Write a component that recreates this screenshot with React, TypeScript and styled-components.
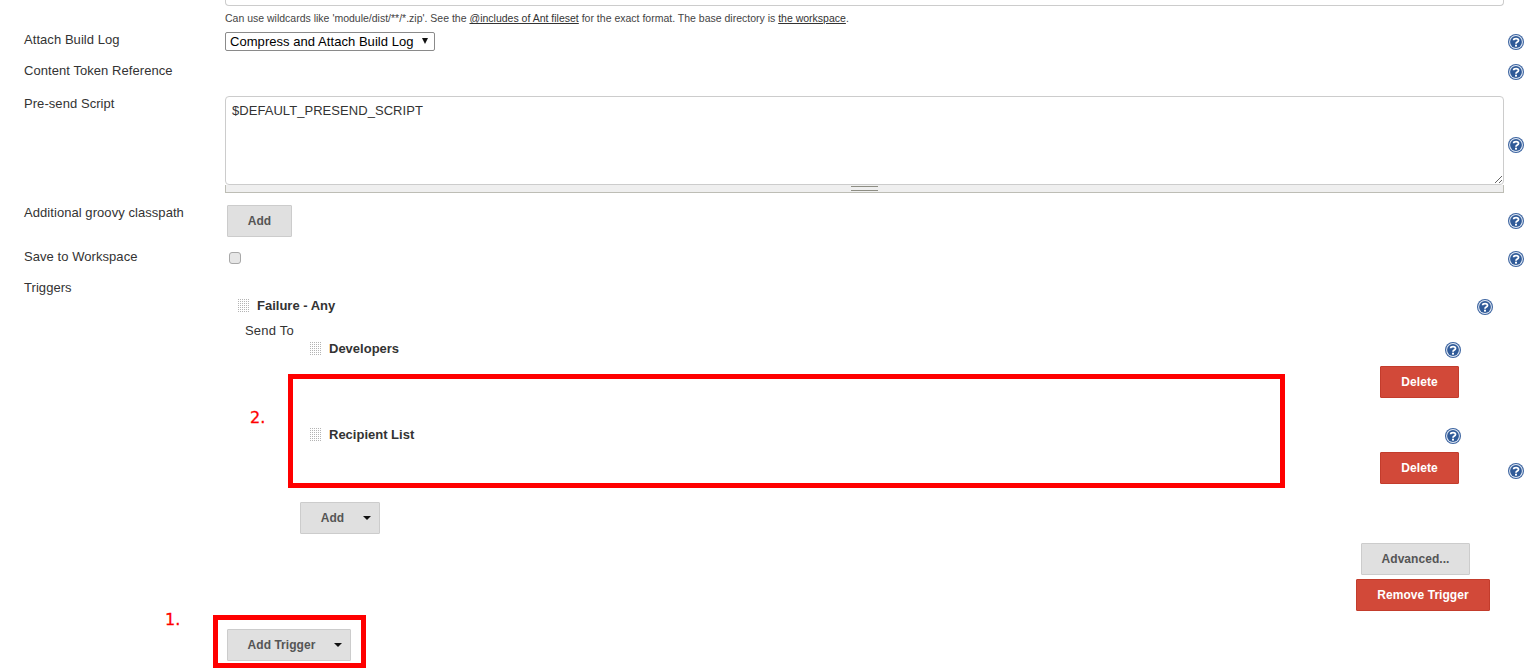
import styled, { createGlobalStyle } from 'styled-components'

const GlobalStyle = createGlobalStyle`
  html, body {
    margin: 0;
    padding: 0;
    background: #fff;
    overflow: hidden;
  }
  body {
    font-family: "Liberation Sans", Arial, sans-serif;
    font-size: 13px;
    color: #333;
  }
`;

const Page = styled.div`
  position: relative;
  width: 1536px;
  height: 668px;
  overflow: hidden;
  display: flex;
  flex-direction: column;
`;

const TopFieldEdge = styled.div`
  margin-left: 225px;
  width: 1277px;
  height: 5px;
  border: 1px solid #ccc;
  border-top: 0;
  border-radius: 0 0 4px 4px;
`;

const Hint = styled.div`
  margin-left: 225px;
  height: 26px;
  padding-top: 6px;
  box-sizing: border-box;
  font-size: 10.5px;
  line-height: 12px;
  color: #444;
  a {
    color: #333;
    text-decoration: underline;
  }
`;

const FormRow = styled.div<{ $height: number }>`
  display: grid;
  grid-template-columns: 225px 1279px 32px;
  height: ${props => props.$height}px;
  flex: none;
`;

const Label = styled.div<{ $top: number }>`
  padding: ${props => props.$top}px 0 0 24px;
  line-height: 15px;
  letter-spacing: 0.06px;
`;

const HelpSlot = styled.div<{ $top: number }>`
  padding: ${props => props.$top}px 0 0 4px;
`;

const HelpSvg = styled.svg`
  display: block;
  width: 16px;
  height: 16px;
  flex: none;
`;

const HelpIcon = () => (
  <HelpSvg viewBox="0 0 16 16">
    <circle cx="8" cy="8" r="8" fill="#3c64a0" />
    <circle cx="8" cy="8" r="6.9" fill="#e4ebf5" />
    <circle cx="8" cy="8" r="5.9" fill="#2f5a98" />
    <path d="M5.6 6.3 C5.7 4.2 10.5 4 10.5 6.5 C10.5 8.2 8.1 8 8 9.8" fill="none" stroke="#fff" strokeWidth="1.8" />
    <rect x="7" y="10.7" width="2" height="1.9" fill="#fff" />
  </HelpSvg>
);

const SelectWrap = styled.div`
  position: relative;
  width: 210px;
  height: 19px;
  &::after {
    content: "";
    position: absolute;
    left: 197px;
    top: 6px;
    border-left: 3.5px solid transparent;
    border-right: 3.5px solid transparent;
    border-top: 6px solid #111;
    pointer-events: none;
  }
`;

const LogSelect = styled.select`
  display: block;
  appearance: none;
  box-sizing: border-box;
  width: 210px;
  height: 19px;
  padding: 0 0 0 4px;
  font-family: "Liberation Sans", Arial, sans-serif;
  font-size: 13px;
  letter-spacing: 0.05px;
  color: #000;
  background: #fff;
  border: 1px solid #8a8a8a;
  border-radius: 2px;
`;

const ScriptArea = styled.textarea`
  display: block;
  box-sizing: border-box;
  width: 1279px;
  height: 89px;
  padding: 6px 6px;
  font-family: "Liberation Sans", Arial, sans-serif;
  font-size: 13px;
  line-height: 16px;
  letter-spacing: 0.05px;
  color: #333;
  border: 1px solid #ccc;
  border-radius: 4px;
  outline: none;
  resize: vertical;
`;

const ResizeGrip = styled.div`
  width: 1279px;
  height: 8px;
  box-sizing: border-box;
  background: #efefef;
  border: 1px solid #bdbdb5;
  border-width: 0 1px 1px;
  display: flex;
  justify-content: center;
  align-items: center;
  &::after {
    content: "";
    width: 27px;
    height: 3px;
    border-top: 1px solid #8e8e84;
    border-bottom: 1px solid #8e8e84;
  }
`;

const GreyButton = styled.button<{ $width: number }>`
  display: flex;
  align-items: center;
  justify-content: center;
  flex: none;
  box-sizing: border-box;
  width: ${props => props.$width}px;
  height: 32px;
  padding: 0;
  font-family: "Liberation Sans", Arial, sans-serif;
  font-size: 12px;
  font-weight: bold;
  letter-spacing: 0.05px;
  color: #555;
  background: #e0e0e0;
  border: 1px solid #ccc;
  border-radius: 1px;
`;

const CaretButton = styled(GreyButton)`
  padding-left: 12px;
`;

const RedButton = styled(GreyButton)`
  color: #fff;
  background: #d24939;
  border-color: #c33c2c;
`;

const Caret = styled.span`
  width: 0;
  height: 0;
  margin-left: 19px;
  border-left: 4px solid transparent;
  border-right: 4px solid transparent;
  border-top: 4px solid #111;
`;

const SaveCheck = styled.input`
  display: block;
  appearance: none;
  box-sizing: border-box;
  width: 12px;
  height: 12px;
  margin: 7px 0 0 4px;
  background: #e6e6e6;
  border: 1px solid #a8a8a8;
  border-radius: 3px;
`;

const AddSlot = styled.div`
  padding-left: 2px;
`;

const TriggerBody = styled.div`
  display: flex;
  flex-direction: column;
  padding-top: 17px;
`;

const DragHead = styled.div<{ $indent: number; $right: number }>`
  display: flex;
  align-items: center;
  height: 16px;
  padding-left: ${props => props.$indent}px;
  padding-right: ${props => props.$right}px;
`;

const Grip = styled.span`
  flex: none;
  width: 12px;
  height: 14px;
  margin-right: 8px;
  background-color: #fff;
  background-image: linear-gradient(#fff 1px, transparent 1px), linear-gradient(90deg, #fff 1px, #b4b4b4 1px);
  background-size: 2px 2px;
`;

const HeadTitle = styled.span`
  flex: 1;
  font-weight: bold;
`;

// the help icons sit a little below the title they belong to
const HeadHelp = styled.span`
  margin-top: 4px;
`;

const SendTo = styled.div`
  height: 17px;
  margin-top: 9px;
  padding-left: 20px;
  line-height: 17px;
  letter-spacing: 0.2px;
`;

const RecipientList = styled.div`
  display: flex;
  flex-direction: column;
  gap: 27px;
  padding-left: 84px;
`;

const Recipient = styled.div`
  display: flex;
  flex-direction: column;
`;

const RecipientHead = styled(DragHead)`
  height: 18px;
`;

const DeleteSlot = styled.div`
  display: flex;
  justify-content: flex-end;
  padding: 9px 45px 0 0;
`;

const AddRecipient = styled.div`
  display: flex;
  margin: 18px 0 0 75px;
`;

const TriggerActions = styled.div`
  display: flex;
  flex-direction: column;
  align-items: flex-end;
  gap: 4px;
  margin-top: 9px;
`;

const AdvancedSlot = styled.div`
  padding-right: 34px;
`;

const RemoveSlot = styled.div`
  padding-right: 14px;
`;

const AddTriggerSlot = styled.div`
  display: flex;
  margin: 18px 0 0 2px;
`;

// red marks that were painted over the screenshot
const RedBox = styled.div<{ $left: number; $top: number; $width: number; $height: number }>`
  position: absolute;
  left: ${props => props.$left}px;
  top: ${props => props.$top}px;
  width: ${props => props.$width}px;
  height: ${props => props.$height}px;
  box-sizing: border-box;
  border: 5px solid #f00;
`;

const RedNumber = styled.div<{ $left: number; $top: number }>`
  position: absolute;
  left: ${props => props.$left}px;
  top: ${props => props.$top}px;
  font-family: "DejaVu Sans", sans-serif;
  font-size: 16px;
  line-height: 18px;
  color: #f00;
  -webkit-text-stroke: 0.3px #f00;
`;

export default function App() {
  return (
    <Page>
      <GlobalStyle />
      <TopFieldEdge />
      <Hint>
        Can use wildcards like 'module/dist/**/*.zip'. See the <a href="#">@includes of Ant fileset</a> for the exact format. The base directory is <a href="#">the workspace</a>.
      </Hint>

      <FormRow $height={31}>
        <Label $top={0}>Attach Build Log</Label>
        <SelectWrap>
          <LogSelect defaultValue="Compress and Attach Build Log">
            <option>Compress and Attach Build Log</option>
          </LogSelect>
        </SelectWrap>
        <HelpSlot $top={2}><HelpIcon /></HelpSlot>
      </FormRow>

      <FormRow $height={33}>
        <Label $top={0}>Content Token Reference</Label>
        <div />
        <HelpSlot $top={1}><HelpIcon /></HelpSlot>
      </FormRow>

      <FormRow $height={109}>
        <Label $top={0}>Pre-send Script</Label>
        <div>
          <ScriptArea defaultValue="$DEFAULT_PRESEND_SCRIPT" />
          <ResizeGrip />
        </div>
        <HelpSlot $top={41}><HelpIcon /></HelpSlot>
      </FormRow>

      <FormRow $height={40}>
        <Label $top={0}>Additional groovy classpath</Label>
        <AddSlot><GreyButton $width={65}>Add</GreyButton></AddSlot>
        <HelpSlot $top={8}><HelpIcon /></HelpSlot>
      </FormRow>

      <FormRow $height={35}>
        <Label $top={4}>Save to Workspace</Label>
        <div><SaveCheck type="checkbox" /></div>
        <HelpSlot $top={6}><HelpIcon /></HelpSlot>
      </FormRow>

      <FormRow $height={388}>
        <Label $top={0}>Triggers</Label>
        <TriggerBody>
          <DragHead $indent={12} $right={11}>
            <Grip />
            <HeadTitle>Failure - Any</HeadTitle>
            <HeadHelp><HelpIcon /></HeadHelp>
          </DragHead>
          <SendTo>Send To</SendTo>
          <RecipientList>
            <Recipient>
              <RecipientHead $indent={0} $right={43}>
                <Grip />
                <HeadTitle>Developers</HeadTitle>
                <HeadHelp><HelpIcon /></HeadHelp>
              </RecipientHead>
              <DeleteSlot><RedButton $width={79}>Delete</RedButton></DeleteSlot>
            </Recipient>
            <Recipient>
              <RecipientHead $indent={0} $right={43}>
                <Grip />
                <HeadTitle>Recipient List</HeadTitle>
                <HeadHelp><HelpIcon /></HeadHelp>
              </RecipientHead>
              <DeleteSlot><RedButton $width={79}>Delete</RedButton></DeleteSlot>
            </Recipient>
          </RecipientList>
          <AddRecipient>
            <CaretButton $width={80}>Add<Caret /></CaretButton>
          </AddRecipient>
          <TriggerActions>
            <AdvancedSlot><GreyButton $width={109}>Advanced...</GreyButton></AdvancedSlot>
            <RemoveSlot><RedButton $width={134}>Remove Trigger</RedButton></RemoveSlot>
          </TriggerActions>
          <AddTriggerSlot>
            <CaretButton $width={124}>Add Trigger<Caret /></CaretButton>
          </AddTriggerSlot>
        </TriggerBody>
        <HelpSlot $top={183}><HelpIcon /></HelpSlot>
      </FormRow>

      <RedBox $left={288} $top={374} $width={997} $height={114} />
      <RedBox $left={213} $top={615} $width={153} $height={53} />
      <RedNumber $left={250} $top={409}>2.</RedNumber>
      <RedNumber $left={165} $top={611}>1.</RedNumber>
    </Page>
  )
}
